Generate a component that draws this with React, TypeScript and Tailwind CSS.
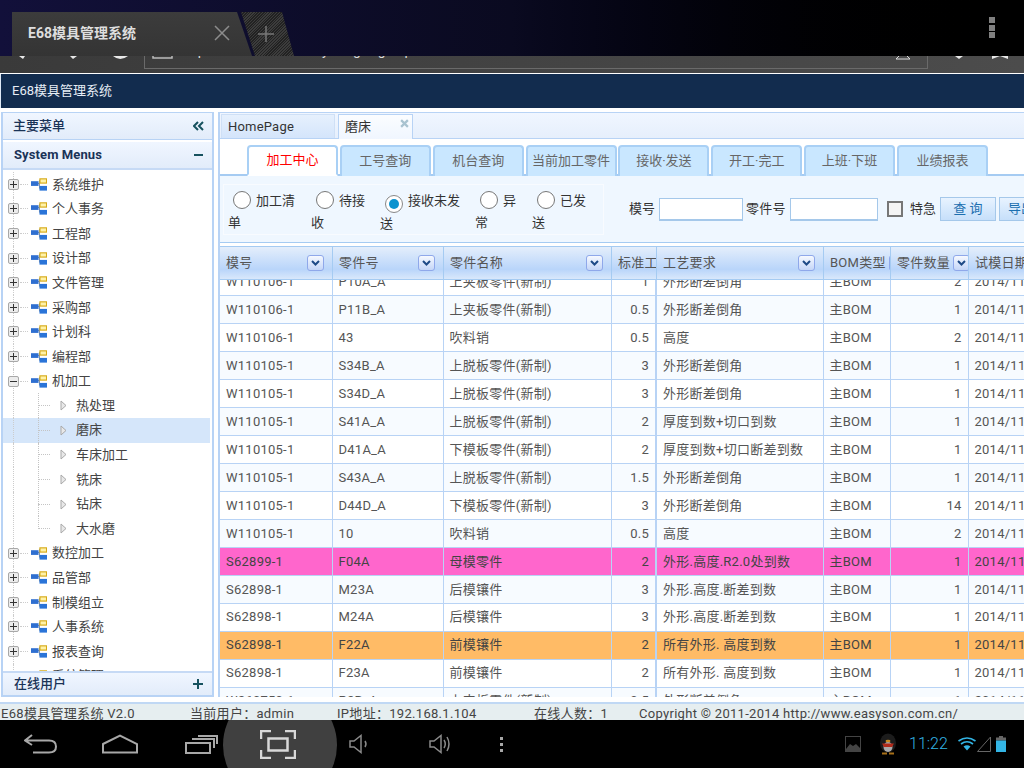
import React from "react";

const tree = ["系统维护","个人事务","工程部","设计部","文件管理","采购部","计划科","编程部"];
const tree2 = ["数控加工","品管部","制模组立","人事系统","报表查询","系统管理"];
const kids = ["热处理","磨床","车床加工","铣床","钻床","大水磨"];
const tabs = ["加工中心","工号查询","机台查询","当前加工零件","接收·发送","开工·完工","上班·下班","业绩报表"];
const radios: [string, string, boolean][] = [
  ["加工清单","w-[83px]",false],["待接收","w-[69px]",false],["接收未发送","w-[95px]",true],["异常","w-[57px]",false],["已发送","w-[70px]",false],
];
const cols: [string, string, boolean][] = [
  ["模号","w-[112px]",true],["零件号","w-[111px]",true],["零件名称","w-[168px]",true],["标准工","w-[45px]",false],
  ["工艺要求","w-[167px]",true],["BOM类型","w-[67px]",true],["零件数量","w-[78px]",true],["试模日期","w-[110px]",false],
];
type Row = [string,string,string,string,string,string,string,string?];
const rows: Row[] = [
  ["W110106-1","P10A_A","上夹板零件(新制)","1","外形断差倒角","主BOM","2"],
  ["W110106-1","P11B_A","上夹板零件(新制)","0.5","外形断差倒角","主BOM","1"],
  ["W110106-1","43","吹料销","0.5","高度","主BOM","2"],
  ["W110105-1","S34B_A","上脱板零件(新制)","3","外形断差倒角","主BOM","1"],
  ["W110105-1","S34D_A","上脱板零件(新制)","3","外形断差倒角","主BOM","1"],
  ["W110105-1","S41A_A","上脱板零件(新制)","2","厚度到数+切口到数","主BOM","1"],
  ["W110105-1","D41A_A","下模板零件(新制)","2","厚度到数+切口断差到数","主BOM","1"],
  ["W110105-1","S43A_A","上脱板零件(新制)","1.5","外形断差倒角","主BOM","1"],
  ["W110105-1","D44D_A","下模板零件(新制)","3","外形断差倒角","主BOM","14"],
  ["W110105-1","10","吹料销","0.5","高度","主BOM","2"],
  ["S62899-1","F04A","母模零件","2","外形.高度.R2.0处到数","主BOM","1","pink"],
  ["S62898-1","M23A","后模镶件","3","外形.高度.断差到数","主BOM","1"],
  ["S62898-1","M24A","后模镶件","3","外形.高度.断差到数","主BOM","1"],
  ["S62898-1","F22A","前模镶件","2","所有外形. 高度到数","主BOM","1","orange"],
  ["S62898-1","F23A","前模镶件","2","所有外形. 高度到数","主BOM","1"],
  ["W260750-1","P2B_A","上夹板零件(新制)","0.5","外形断差倒角","主BOM","1"],
];

function Org() {
  return (
    <svg width="16" height="13" viewBox="0 0 17 13" className="shrink-0">
      <path d="M7 5.5H9M9 2V10.5M9 2H11M9 10.5H11" stroke="#7a8ba3" strokeWidth="1" fill="none" />
      <rect x="0" y="3" width="8" height="5" fill="#2f6fd0" />
      <rect x="9.5" y="0.5" width="7" height="4.5" fill="#fff2a8" stroke="#d6a916" strokeWidth="1.2" />
      <rect x="9" y="8" width="8" height="5" fill="#2a74d8" />
    </svg>
  );
}
function Box({ minus }: { minus?: boolean }) {
  return (
    <span className="relative flex h-[11px] w-[11px] shrink-0 items-center justify-center rounded-[2px] border border-[#a8a8a8] bg-[#ececec]">
      <span className="absolute h-px w-[7px] bg-[#333]" />
      {!minus && <span className="absolute h-[7px] w-px bg-[#333]" />}
    </span>
  );
}
function TopRow({ label, minus }: { label: string; minus?: boolean }) {
  return (
    <div className="relative flex h-[24.6px] items-center pl-[5px]">
      <span className="absolute bottom-0 left-[10px] top-0 border-l border-dotted border-[#ccc]" />
      <Box minus={minus} />
      <span className="ml-[1px] w-[8px] border-t border-dotted border-[#ccc]" />
      <span className="ml-[3px]"><Org /></span>
      <span className="ml-[5px] text-[13px] text-[#444]">{label}</span>
    </div>
  );
}
function KidRow({ label, active, last }: { label: string; active?: boolean; last?: boolean }) {
  return (
    <div className={`relative flex h-[24.6px] w-[207px] items-center pl-[35px] ${active ? "bg-[#d5e6fa]" : ""}`}>
      <span className="absolute bottom-0 left-[10px] top-0 border-l border-dotted border-[#ccc]" />
      <span className={`absolute left-[35px] top-0 border-l border-dotted border-[#c4c4c4] ${last ? "bottom-1/2" : "bottom-0"}`} />
      <span className="w-[12px] border-t border-dotted border-[#c4c4c4]" />
      <svg width="7" height="11" viewBox="0 0 7 11" className="ml-[10px] shrink-0">
        <path d="M1 1L6 5.5L1 10Z" fill="#e8e8e8" stroke="#a9a9a9" />
      </svg>
      <span className="ml-[9px] text-[13px] text-[#444]">{label}</span>
    </div>
  );
}
function Sort() {
  return (
    <span className="flex h-[16px] w-[17px] shrink-0 items-center justify-center rounded-[3px] border border-[#8fa8ea] bg-gradient-to-b from-[#f6f9ff] to-[#c4d6f7]">
      <svg width="9" height="6" viewBox="0 0 9 6"><path d="M1 1L4.5 4.5L8 1" stroke="#1e4a86" strokeWidth="2" fill="none" /></svg>
    </span>
  );
}

export default function App() {
  return (
    <div className="flex h-[768px] w-[1024px] flex-col overflow-hidden bg-white [font-family:Roboto,'Noto_Sans_CJK_SC',sans-serif]">
      {/* Browser tabs */}
      <div className="flex h-[56px] shrink-0 items-end bg-gradient-to-r from-[#12103a] via-[#0a0a20] to-[#000] pl-[12px]">
        <div className="flex h-[44px] w-[240px] shrink-0 items-center bg-gradient-to-b from-[#3c3c3c] to-[#343434] pb-[2px] pl-[16px] [clip-path:polygon(0_0,225px_0,100%_100%,0_100%)]">
          <span className="text-[14px] font-bold text-[#dedede]">E68模具管理系统</span>
          <svg width="16" height="16" viewBox="0 0 16 16" className="ml-[78px]"><path d="M1 1L15 15M15 1L1 15" stroke="#8c8c8c" strokeWidth="1.5" /></svg>
        </div>
        <div className="-ml-[11px] flex h-[44px] w-[53px] shrink-0 items-center justify-center bg-[repeating-linear-gradient(135deg,#222_0,#222_1px,#3c3c3c_1px,#3c3c3c_2px)] pr-[3px] [clip-path:polygon(0_0,41px_0,100%_100%,14px_100%)]">
          <svg width="18" height="18" viewBox="0 0 18 18"><path d="M9 1V17M1 9H17" stroke="#777" strokeWidth="1.5" /></svg>
        </div>
        <div className="mb-[18px] ml-auto mr-[29px] flex flex-col gap-[1.5px]">
          <span className="h-[6px] w-[6px] bg-[#808080]" /><span className="h-[6px] w-[6px] bg-[#808080]" /><span className="h-[6px] w-[6px] bg-[#808080]" />
        </div>
      </div>
      {/* Address bar, mostly covered by the tab strip */}
      <div className="relative flex h-[17px] shrink-0 overflow-hidden bg-gradient-to-r from-[#3a3a3a] to-[#4c4c4c]">
        <svg width="1024" height="17" viewBox="0 0 1024 17" className="absolute left-0 top-0">
          <path d="M19 0L23 3L25 0ZM70 0L73 3L77 0Z" fill="#e8e8e8" />
          <path d="M113 0Q120 6 128 0Z" fill="#e8e8e8" />
          <path d="M153 0V2H172V0" stroke="#bbb" strokeWidth="1.5" fill="none" />
          <path d="M896 3L899 0M910 3L907 0M896 3H910" stroke="#ddd" strokeWidth="1" fill="none" />
          <path d="M955 0L959 3L963 0Z" fill="#e8e8e8" />
          <path d="M992 3L1000 0L1008 3V0H992Z" fill="#e8e8e8" />
        </svg>
        <div className="relative ml-[144px] h-[13px] w-[784px] border-x border-b border-[#6a6a6a] pl-[36px]">
          <div className="-mt-[13px] whitespace-nowrap text-[14px] leading-[14px] text-[#ddd]">http://192.168.1.104/sys/login/g/e/p</div>
        </div>
      </div>
      {/* App header */}
      <div className="mt-px flex h-[34px] shrink-0 items-center border-l border-[#dfe9f5] bg-[#122c4e] pl-[11px]">
        <span className="text-[13px] text-[#e6edf5]">E68模具管理系统</span>
      </div>
      {/* Main */}
      <div className="mt-[4px] flex h-[585px] shrink-0 gap-[4px] pl-px">
        {/* Sidebar */}
        <aside className="flex h-[585px] w-[213px] shrink-0 flex-col overflow-hidden border-x-2 border-[#b8d3f5]">
          <div className="flex h-[28px] shrink-0 items-center justify-between border-y border-[#b8d3f5] bg-gradient-to-b from-[#f0f6ff] to-[#e2ecfa] pl-[10px] pr-[8px]">
            <span className="text-[13px] font-medium text-[#1a3357]">主要菜单</span>
            <svg width="11" height="10" viewBox="0 0 11 10"><path d="M5 1L1 5L5 9M10 1L6 5L10 9" stroke="#17525f" strokeWidth="2" fill="none" /></svg>
          </div>
          <div className="mt-[2px] flex h-[28px] shrink-0 items-center justify-between border-b-2 border-[#c6daf5] bg-gradient-to-b from-[#f0f6ff] to-[#e2ecfa] pl-[11px] pr-[9px]">
            <span className="text-[13px] font-bold tracking-[0.1px] text-[#1a3357]">System Menus</span>
            <span className="h-[2px] w-[9px] bg-[#17525f]" />
          </div>
          <div className="min-h-0 flex-1 overflow-hidden bg-white pt-[2px]">
            {tree.map((t) => <TopRow key={t} label={t} />)}
            <TopRow label="机加工" minus />
            {kids.map((k, i) => <KidRow key={k} label={k} active={k === "磨床"} last={i === kids.length - 1} />)}
            {tree2.map((t) => <TopRow key={t} label={t} />)}
          </div>
          <div className="flex h-[26px] shrink-0 items-center justify-between border-y-2 border-b-[#b8d3f5] border-t-[#c6daf5] bg-gradient-to-b from-[#f0f6ff] to-[#e2ecfa] pl-[11px] pr-[9px]">
            <span className="text-[13px] font-medium text-[#1a3357]">在线用户</span>
            <svg width="10" height="10" viewBox="0 0 10 10"><path d="M5 0V10M0 5H10" stroke="#17525f" strokeWidth="2" /></svg>
          </div>
        </aside>
        {/* Content */}
        <main className="flex h-[585px] min-w-0 flex-1 flex-col overflow-hidden border-l-2 border-[#b8d3f5]">
          <div className="flex h-[27px] shrink-0 items-end gap-[3px] border-y border-[#b8d3f5] bg-gradient-to-b from-[#f0f6ff] to-[#e6effc] pl-[1px]">
            <div className="flex h-[24px] w-[114px] items-center border-x border-t border-[#cfe0f6] bg-gradient-to-b from-[#e6f0fd] to-[#d4e5fb] pl-[6px] text-[13px] tracking-[0.2px] text-[#333]">HomePage</div>
            <div className="relative -mb-px flex h-[25px] w-[75px] items-center border-x border-t border-[#b8d3f5] bg-gradient-to-b from-[#fbfdff] to-[#f0f6ff] pl-[6px] text-[13px] text-[#333]">
              磨床
              <svg width="9" height="9" viewBox="0 0 8 8" className="absolute right-[3px] top-[4px]"><path d="M1 1L7 7M7 1L1 7" stroke="#a9c3d0" strokeWidth="2" /></svg>
            </div>
          </div>
          <div className="flex h-[37px] shrink-0 items-end gap-[1.85px] border-b-2 border-[#a5cbf2] pl-[27px] pt-[6px]">
            {tabs.map((t, i) => (
              <div key={t} className={`-mb-[2px] flex h-[31px] w-[91px] shrink-0 items-center justify-center rounded-t-[4px] border-x-2 border-t-2 border-[#a9d0f5] pb-[2px] text-[13px] ${i === 0 ? "border-b-2 border-b-white bg-white text-[#f00]" : "border-b-0 bg-[#c9e7ff] text-[#666]"}`}>{t}</div>
            ))}
          </div>
          <div className="flex h-[67px] shrink-0 items-center border-b border-[#a5cbf2] bg-[#eff7ff] pl-[3px]">
            <div className="flex h-[51px] w-[381px] shrink-0 border border-[#f8fbff] pl-[4px] pt-[5px] text-[13px] leading-[22px] text-[#333]">
              {radios.map(([l, w, on]) => (
                <div key={l} className={`${w} shrink-0 pr-[8px]`}>
                  <span className={`ml-[5px] mr-[5px] inline-flex h-[18px] w-[18px] items-center justify-center rounded-full border-[1.5px] bg-white align-[-4px] ${on ? "border-[#888]" : "border-[#777]"}`}>
                    {on && <span className="h-[10px] w-[10px] rounded-full bg-[#0c93cf]" />}
                  </span>
                  {l}
                </div>
              ))}
            </div>
            <div className="ml-[25px] flex shrink-0 items-center text-[13px] text-[#333]">
              <span>模号</span>
              <input className="ml-[4px] h-[23px] w-[84px] border border-b-2 border-[#a5c8ea] bg-white" />
              <span className="ml-[3px] tracking-[0.3px]">零件号</span>
              <input className="ml-[4px] h-[23px] w-[88px] border border-b-2 border-[#a5c8ea] bg-white" />
              <span className="ml-[9px] h-[16px] w-[16px] border-2 border-[#777] bg-[#f4f4f4]" />
              <span className="ml-[7px]">特急</span>
              <div className="ml-[4px] flex h-[24px] w-[56px] shrink-0 items-center justify-center border border-[#a5c8ea] bg-gradient-to-b from-[#e8f3ff] to-[#c6dffa] text-[#1c6fb0]">查 询</div>
              <div className="ml-[3px] flex h-[24px] w-[56px] shrink-0 items-center border border-[#a5c8ea] bg-gradient-to-b from-[#e8f3ff] to-[#c6dffa] pl-[8px] text-[#1c6fb0]">导出</div>
            </div>
          </div>
          <div className="mt-[3px] min-h-0 flex-1 overflow-hidden">
            <div className="flex h-[34px] w-[858px] border-y border-[#a5cbf2] bg-gradient-to-b from-[#e4eefb] via-[#b9d5fa] via-70% to-[#d9e8fb] text-[13px] tracking-[0.25px] text-[#555]">
              {cols.map(([c, w, s], i) => (
                <div key={c} className={`${w} flex shrink-0 items-center justify-between overflow-hidden whitespace-nowrap pl-[6px] pr-[8px] ${i ? "border-l border-[#a5cbf2]" : ""}`}>
                  <span className="mr-[3px]">{c}</span>{s && <Sort />}
                </div>
              ))}
            </div>
            <div className="h-[417px] overflow-hidden">
              <table className="-mt-[12px] w-[858px] table-fixed border-collapse text-[13px] text-[#555]">
                <colgroup>
                  {cols.map(([c, w]) => <col key={c} className={w} />)}
                </colgroup>
                <tbody>
                  {rows.map((r, i) => {
                    const bg = r[7] === "pink" ? "bg-[#ff66cc]" : r[7] === "orange" ? "bg-[#ffbb66]" : i % 2 ? "bg-[#f7fbff]" : "bg-white";
                    const txt = r[7] ? "text-[#444]" : "";
                    return (
                      <tr key={i} className={`h-[27.95px] ${bg} ${txt}`}>
                        {[r[0], r[1], r[2], r[3], r[4], r[5], r[6], "2014/11/12"].map((c, j) => (
                          <td key={j} className={`overflow-hidden whitespace-nowrap border-b border-[#b8d3f5] p-0 tracking-[0.25px] ${j ? "border-l" : ""} ${j === 4 ? "border-l-2" : ""} ${j === 3 || j === 6 ? "pr-[6px] text-right" : "pl-[6px]"}`}>{c}</td>
                        ))}
                      </tr>
                    );
                  })}
                </tbody>
              </table>
            </div>
          </div>
        </main>
      </div>
      {/* Footer */}
      <div className="mt-[5px] flex h-[18px] shrink-0 items-start overflow-hidden whitespace-nowrap border-t-2 border-[#c0d8f4] bg-[#e6eef0] pl-[1px] pt-[1px] text-[13px] leading-[18px] tracking-[0.3px] text-[#444]">
        <span className="w-[189px] shrink-0">E68模具管理系统 V2.0</span>
        <span className="w-[147px] shrink-0">当前用户：admin</span>
        <span className="w-[197px] shrink-0">IP地址：192.168.1.104</span>
        <span className="w-[105px] shrink-0">在线人数：1</span>
        <span>Copyright © 2011-2014 http://www.easyson.com.cn/</span>
      </div>
      {/* Android nav bar */}
      <div className="relative flex h-[48px] shrink-0 items-center overflow-hidden bg-black pl-[24px]">
        <div className="absolute -top-[32px] left-[223px] h-[114px] w-[114px] rounded-full bg-[#404040]" />
        <svg width="33" height="20" viewBox="0 0 33 20" className="relative"><path d="M8 1L1 6.5L8 11M1 6.5H25Q32 6.5 32 12.5T25 18.5H9" stroke="#a8a8a8" strokeWidth="2" fill="none" /></svg>
        <svg width="36" height="20" viewBox="0 0 36 20" className="relative ml-[45px]"><path d="M1 10L18 1.5L35 10V18.5H1Z" stroke="#a8a8a8" strokeWidth="2" fill="none" /></svg>
        <svg width="34" height="19" viewBox="0 0 34 19" className="relative ml-[46px]"><path d="M2 8H26V18H2ZM8 4H30V13M14 1H33V9" stroke="#a8a8a8" strokeWidth="2" fill="none" /></svg>
        <svg width="36" height="29" viewBox="0 0 36 29" className="relative ml-[42px]"><path d="M1 9V1H11M25 1H35V9M1 20V28H11M25 28H35V20" stroke="#d8d8d8" strokeWidth="2.5" fill="none" /><rect x="8.5" y="8.5" width="19" height="12" stroke="#d8d8d8" strokeWidth="2.5" fill="none" /></svg>
        <svg width="20" height="20" viewBox="0 0 20 20" className="relative ml-[53px]"><path d="M1 7H5L12 1.5V18.5L5 13H1Z" stroke="#8a8a8a" strokeWidth="1.5" fill="none" /><path d="M16 7Q18 10 16 13" stroke="#8a8a8a" strokeWidth="1.5" fill="none" /></svg>
        <svg width="22" height="20" viewBox="0 0 22 20" className="relative ml-[60px]"><path d="M1 7H5L12 1.5V18.5L5 13H1Z" stroke="#8a8a8a" strokeWidth="1.5" fill="none" /><path d="M15 6Q17.5 10 15 14M18 3Q22 10 18 17" stroke="#8a8a8a" strokeWidth="1.5" fill="none" /></svg>
        <div className="relative ml-[49px] flex flex-col gap-[3px]">
          <span className="h-[3px] w-[3px] bg-[#a8a8a8]" /><span className="h-[3px] w-[3px] bg-[#a8a8a8]" /><span className="h-[3px] w-[3px] bg-[#a8a8a8]" />
        </div>
        <svg width="16" height="16" viewBox="0 0 16 16" className="relative ml-[342px]"><rect x="0.5" y="0.5" width="15" height="15" stroke="#444" fill="none" /><path d="M1 13L5 8L8 10L11 8L15 12V15H1Z" fill="#444" /></svg>
        <svg width="20" height="22" viewBox="0 0 20 22" className="relative ml-[17px]"><ellipse cx="10" cy="10" rx="8" ry="9.5" fill="#1c1c1c" /><ellipse cx="10" cy="14" rx="4.5" ry="5" fill="#aaa" /><path d="M4 10.5H16L14 14H6Z" fill="#b02a1a" /><ellipse cx="10" cy="8" rx="2.5" ry="1.2" fill="#c88a20" /><path d="M4 20.5H9M11 20.5H16" stroke="#a87018" strokeWidth="2" /></svg>
        <span className="relative ml-[11px] text-[16px] font-light text-[#33b5e5]">11:22</span>
        <svg width="20" height="14" viewBox="0 0 19 14" className="relative ml-[9px]"><path d="M1 4Q9.5 -2 18 4" stroke="#33b5e5" strokeWidth="1.6" fill="none" /><path d="M3.5 7Q9.5 2.5 15.5 7" stroke="#33b5e5" strokeWidth="1.6" fill="none" /><path d="M6 9.5Q9.5 7 13 9.5L9.5 13.5Z" fill="#33b5e5" /></svg>
        <svg width="14" height="16" viewBox="0 0 14 16" className="relative"><path d="M0.5 15.5L13.5 1V15.5Z" stroke="#666" fill="none" /></svg>
        <svg width="10" height="16" viewBox="0 0 10 16" className="relative ml-[5px]"><rect x="3" y="0" width="4" height="2" fill="#666" /><rect x="0" y="1.5" width="10" height="3" fill="#666" /><rect x="0" y="4.5" width="10" height="11.5" fill="#33b5e5" /></svg>
      </div>
    </div>
  );
}
